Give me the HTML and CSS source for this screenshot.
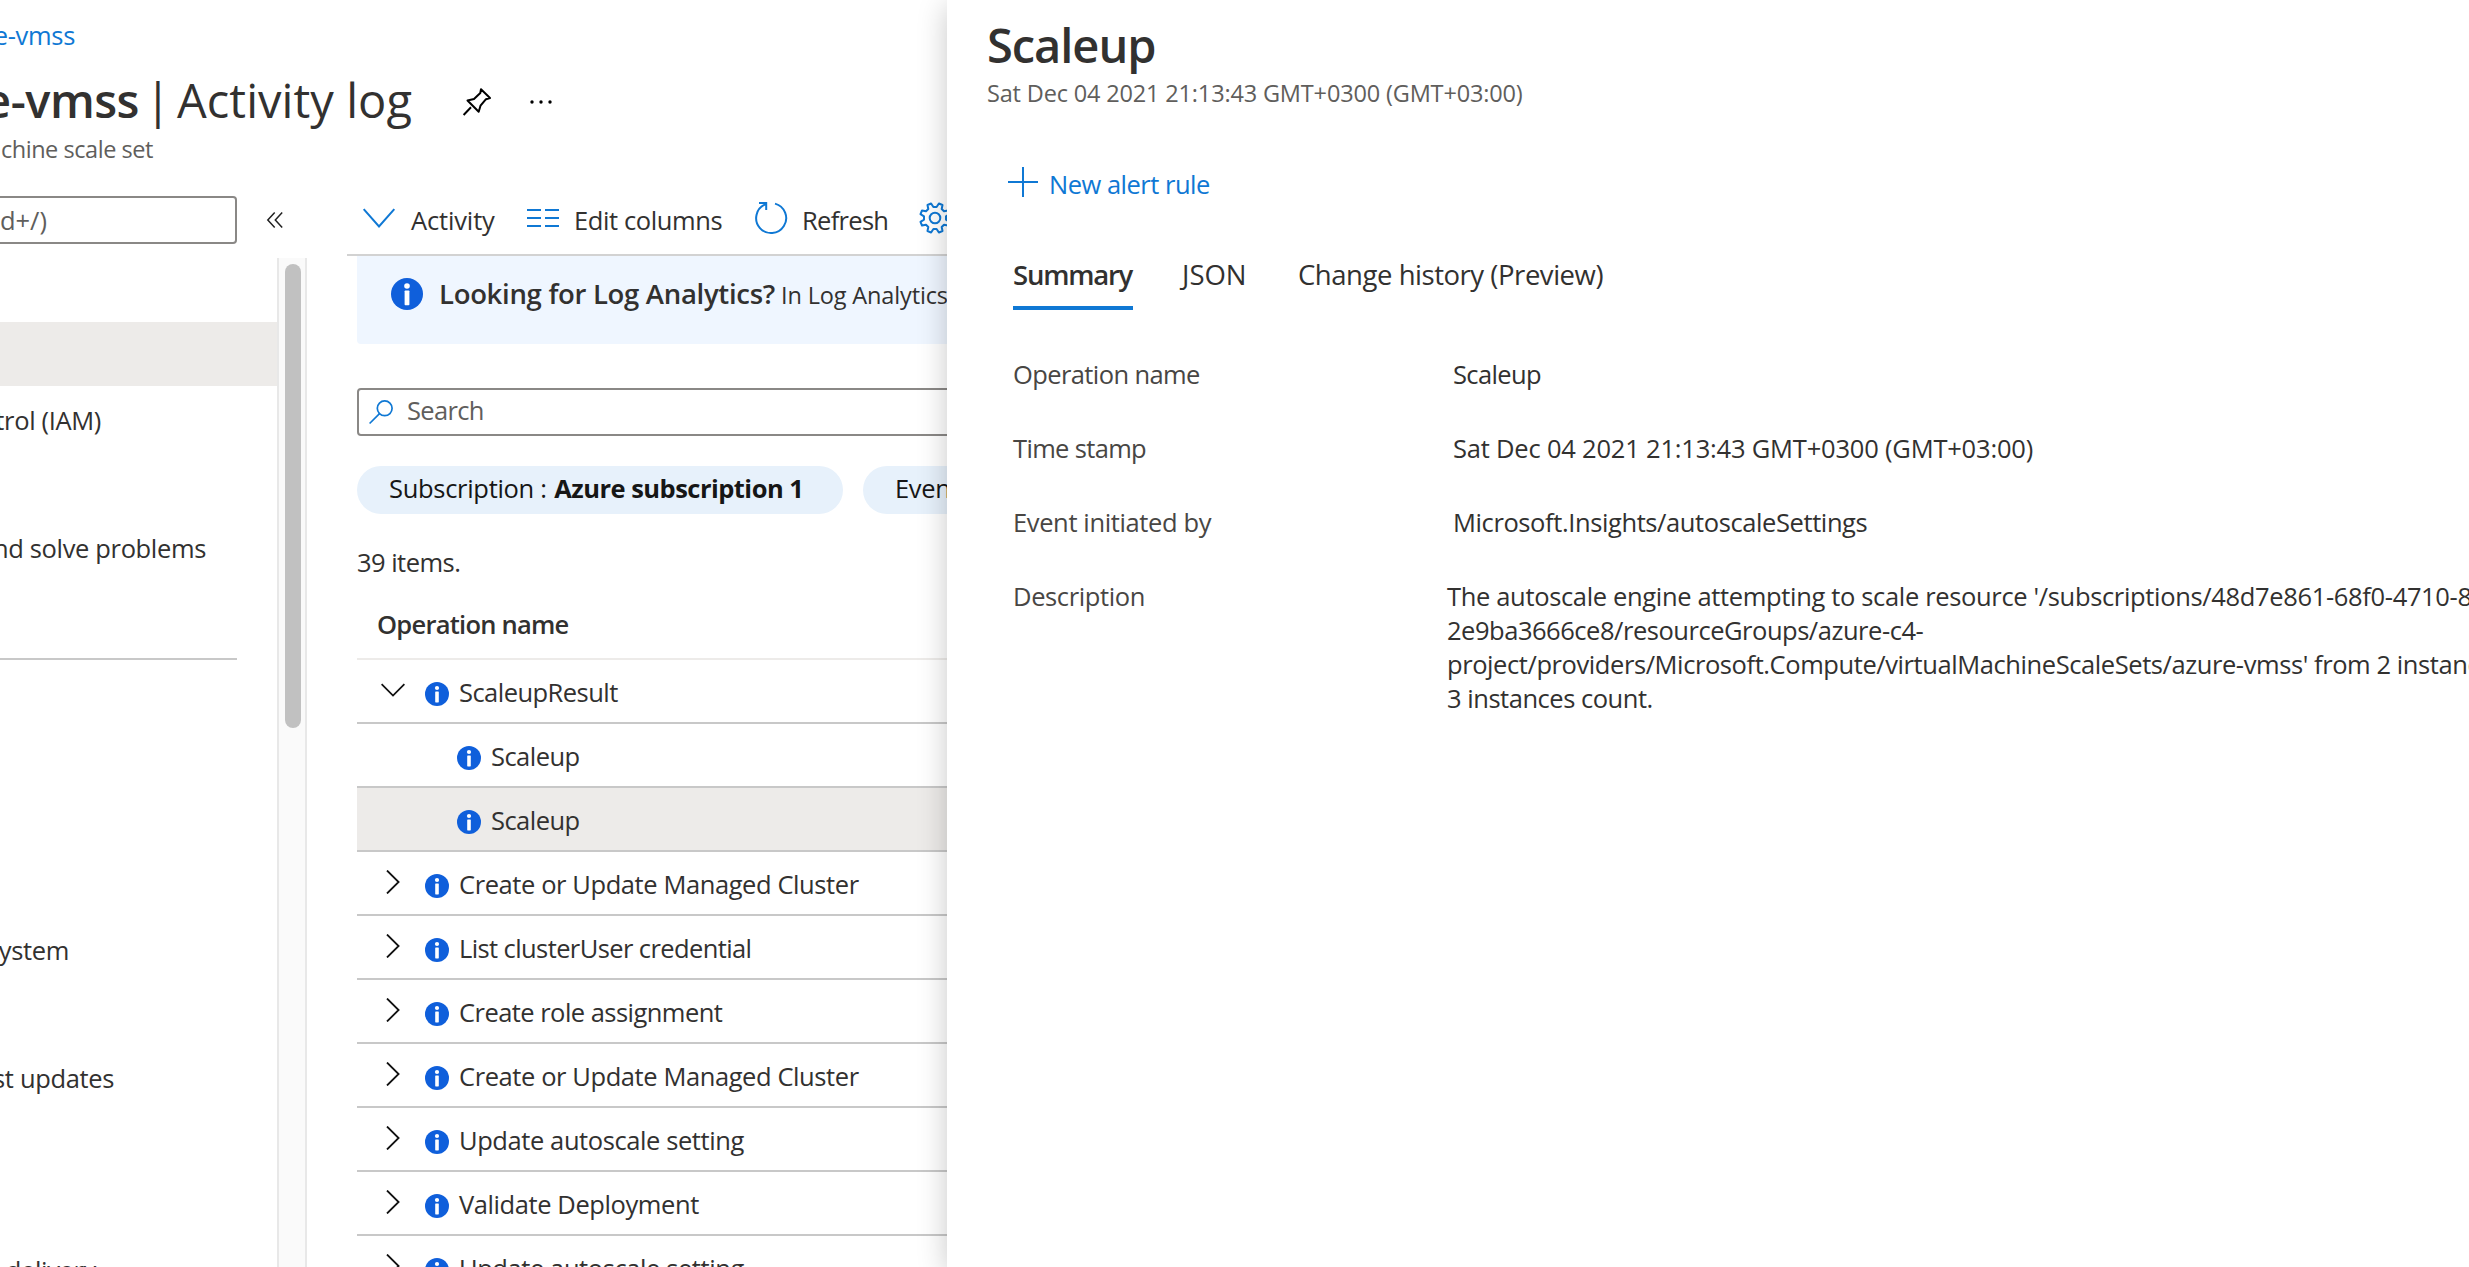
FILE: index.html
```html
<!DOCTYPE html>
<html lang="en">
<head>
<meta charset="utf-8">
<title>Activity log</title>
<link rel="stylesheet" href="styles.css">
</head>
<body>
<svg class="defs" width="0" height="0">
  <symbol id="info" viewBox="0 0 24 24"><circle cx="12" cy="12" r="12" fill="#0f5fdb"/><circle cx="12" cy="6" r="2.1" fill="#fff"/><rect x="10.2" y="9.4" width="3.6" height="11" rx=".6" fill="#fff"/></symbol>
  <symbol id="right" viewBox="0 0 24 24"><path d="M6 .5 17.6 12 6 23.5" fill="none" stroke="#111" stroke-width="1.8"/></symbol>
  <symbol id="down" viewBox="0 0 24 24"><path d="M.6 6.2 12 17.6 23.4 6.2" fill="none" stroke="#111" stroke-width="1.8"/></symbol>
</svg>
<div class="page">
  <header class="header">
    <div class="crumb"><a class="link">e-vmss</a></div>
    <div class="title-row">
      <h1 class="title"><span class="title-name">e-vmss</span><span class="title-bar">|</span><span class="title-page">Activity log</span></h1>
      <svg class="pin" viewBox="0 0 28 28"><path d="M4.500 12.500 11 11 17.300 5 18 1.300 27 10 23 11.200 17.500 17.700 15.700 23.700ZM8 19.300 .600 27" fill="none" stroke="#000" stroke-width="2" stroke-linejoin="round"/></svg>
      <svg class="dots" viewBox="0 0 22 4"><circle cx="2" cy="2" r="1.700"/><circle cx="11" cy="2" r="1.700"/><circle cx="20" cy="2" r="1.700"/></svg>
    </div>
    <div class="kind"><span>chine scale set</span></div>
  </header>
  <div class="columns">
    <aside class="side">
      <div class="side-search">
        <div class="filter"><span>d+/)</span></div>
        <svg class="collapse" viewBox="0 0 16 16"><path d="M7.700 .500.800 8l6.900 7.500M15.200.500 8.300 8l6.900 7.500" fill="none" stroke="#222" stroke-width="1.500"/></svg>
      </div>
      <div class="menu">
        <ul class="menu-list">
          <li class="menu-item"></li>
          <li class="menu-item selected"></li>
          <li class="menu-item"><span class="w-iam">trol (IAM)</span></li>
          <li class="menu-item"></li>
          <li class="menu-item"><span class="w-solve">nd solve problems</span></li>
          <li class="menu-item"></li>
          <li class="menu-rule"></li>
          <li class="menu-item"><span class="w-system">system</span></li>
          <li class="menu-item"></li>
          <li class="menu-item"><span class="w-updates">st updates</span></li>
          <li class="menu-item"></li>
          <li class="menu-item"></li>
          <li class="menu-item"><span class="w-delivery">delivery</span></li>
        </ul>
        <div class="track"><div class="thumb"></div></div>
      </div>
    </aside>
    <main class="main">
      <div class="toolbar">
        <div class="tool tool-a"><svg viewBox="0 0 32 32"><path d="M.700 7.200 16 24.500 31.300 7.200" fill="none" stroke="#0f78d4" stroke-width="2"/></svg><span class="ls1">Activity</span></div>
        <div class="tool tool-b"><svg viewBox="0 0 32 32"><path d="M0 8h14M18 8h14M0 16h14M18 16h14M0 24h14M18 24h14" stroke="#0f78d4" stroke-width="2"/></svg><span class="ls2">Edit columns</span></div>
        <div class="tool tool-c"><svg viewBox="0 0 32 32"><path d="M20 1.600A15 15 0 1 1 10.300 2.300M4 1h7.200v7" fill="none" stroke="#0f78d4" stroke-width="2"/></svg><span class="ls3">Refresh</span></div>
        <div class="tool"><svg viewBox="-16 -16 32 32"><path d="M11 1.600 14.500 3.900 13 7.500 9 6.700 6.700 9 7.500 13 3.900 14.500 1.600 11H-1.600L-3.900 14.500-7.500 13-6.700 9-9 6.700-13 7.500-14.500 3.900-11 1.600V-1.600L-14.500-3.900-13-7.500-9-6.700-6.700-9-7.500-13-3.900-14.500-1.600-11H1.600L3.900-14.500 7.500-13 6.700-9 9-6.700 13-7.500 14.500-3.900 11-1.600Z" fill="none" stroke="#0f78d4" stroke-width="2" stroke-linejoin="round"/><circle r="5.300" fill="none" stroke="#0f78d4" stroke-width="2"/></svg></div>
      </div>
      <div class="banner"><svg class="banner-icon"><use href="#info"/></svg><strong>Looking for Log Analytics?</strong><span>In Log Analytics</span></div>
      <div class="search"><svg viewBox="0 0 24 24"><circle cx="15.700" cy="8.300" r="7.400" fill="none" stroke="#0f78d4" stroke-width="1.700"/><path d="M10.500 13.600.600 23.500" stroke="#0f78d4" stroke-width="1.700"/></svg><span>Search</span></div>
      <div class="pills">
        <div class="pill pill-sub"><span class="ls4">Subscription :</span><b>Azure subscription 1</b></div>
        <div class="pill"><span class="ls4">Event severity</span></div>
      </div>
      <div class="count">39 items.</div>
      <div class="table">
        <div class="table-head">Operation name</div>
        <div class="row"><svg><use href="#down"/></svg><svg><use href="#info"/></svg><span class="w-short">ScaleupResult</span></div>
        <div class="row child"><svg><use href="#info"/></svg><span class="w-short">Scaleup</span></div>
        <div class="row child active"><svg><use href="#info"/></svg><span class="w-short">Scaleup</span></div>
        <div class="row"><svg><use href="#right"/></svg><svg><use href="#info"/></svg><span>Create or Update Managed Cluster</span></div>
        <div class="row"><svg><use href="#right"/></svg><svg><use href="#info"/></svg><span class="w-list">List clusterUser credential</span></div>
        <div class="row"><svg><use href="#right"/></svg><svg><use href="#info"/></svg><span class="w-short">Create role assignment</span></div>
        <div class="row"><svg><use href="#right"/></svg><svg><use href="#info"/></svg><span>Create or Update Managed Cluster</span></div>
        <div class="row"><svg><use href="#right"/></svg><svg><use href="#info"/></svg><span>Update autoscale setting</span></div>
        <div class="row"><svg><use href="#right"/></svg><svg><use href="#info"/></svg><span>Validate Deployment</span></div>
        <div class="row"><svg><use href="#right"/></svg><svg><use href="#info"/></svg><span>Update autoscale setting</span></div>
      </div>
    </main>
  </div>
</div>
<section class="panel">
  <h2 class="panel-title">Scaleup</h2>
  <div class="panel-time">Sat Dec 04 2021 21:13:43 GMT+0300 (GMT+03:00)</div>
  <div class="command"><svg viewBox="0 0 30 30"><path d="M15 0v30M0 15h30" stroke="#0f78d4" stroke-width="2"/></svg><a class="link">New alert rule</a></div>
  <nav class="tabs">
    <div class="tab tab-on">Summary</div>
    <div class="tab tab-json">JSON</div>
    <div class="tab">Change history (Preview)</div>
  </nav>
  <dl class="details">
    <div class="detail"><dt class="d-op">Operation name</dt><dd class="w-name">Scaleup</dd></div>
    <div class="detail"><dt class="d-time">Time stamp</dt><dd class="w-time">Sat Dec 04 2021 21:13:43 GMT+0300 (GMT+03:00)</dd></div>
    <div class="detail"><dt class="d-event">Event initiated by</dt><dd class="w-event">Microsoft.Insights/autoscaleSettings</dd></div>
    <div class="detail"><dt class="d-desc">Description</dt><dd class="text"><span>The autoscale engine attempting to scale resource '/subscriptions/48d7e861-68f0-4710-8</span><br><span class="w-line2">2e9ba3666ce8/resourceGroups/azure-c4-</span><br><span class="w-line3">project/providers/Microsoft.Compute/virtualMachineScaleSets/azure-vmss' from 2 instances</span><br><span class="w-line2">3 instances count.</span></dd></div>
  </dl>
</section>
</body>
</html>
```
FILE: styles.css
```css
* { box-sizing: border-box; }

body {
  margin: 0;
  height: 1267px;
  overflow: hidden;
  position: relative;
  background: #fff;
  color: #323130;
  font: 25.5px/34px "Open Sans", "Noto Sans", sans-serif;
  white-space: nowrap;
}

h1, h2, ul, dl, dd { margin: 0; padding: 0; }
ul { list-style: none; }
svg { display: block; flex: none; overflow: visible; }
.defs { position: absolute; }
.link { color: #0f78d4; }

.page { display: flex; flex-direction: column; height: 1267px; overflow: hidden; }

/* Header */
.header { height: 170px; }
.crumb, .kind { display: flex; justify-content: flex-end; }
.crumb { width: 75px; line-height: 71px; height: 70px; letter-spacing: -0.3px; }
.title-row { display: flex; height: 58px; }
.title { display: flex; width: 463px; line-height: 60px; font-size: 47px; font-weight: 400; }
.title-name { display: flex; justify-content: flex-end; width: 139px; font-weight: 600; letter-spacing: -0.5px; }
.title-bar { width: 38px; padding-left: 6px; }
.title-page { letter-spacing: 0.05px; }
.pin { width: 28px; height: 28px; margin-top: 18px; }
.dots { width: 22px; height: 4px; margin: 30px 0 0 39px; }
.kind { width: 153px; line-height: 42px; font-size: 23.5px; letter-spacing: -0.45px; color: #605e5c; }

/* Side menu */
.columns { display: flex; flex: 1; min-height: 0; }
.side { display: flex; flex-direction: column; width: 347px; }
.side-search { display: flex; align-items: center; height: 88px; padding: 26px 0 14px; }
.filter {
  display: flex;
  justify-content: flex-end;
  width: 237px;
  height: 48px;
  padding-right: 188px;
  border: 2px solid #8a8886;
  border-left: 0;
  border-radius: 0 4px 4px 0;
  line-height: 45px;
  color: #605e5c;
}
.collapse { width: 16px; height: 16px; margin-left: 30px; }
.menu { display: flex; flex: 1; min-height: 0; }
.menu-list { width: 277px; height: 1009px; overflow: hidden; }
.menu-item { display: flex; height: 64px; padding-top: 17px; }
.menu-item span { display: flex; justify-content: flex-end; letter-spacing: -0.35px; }
.selected { background: #edebe9; }
.menu-rule { width: 237px; height: 274px; background: linear-gradient(#c8c8c8, #c8c8c8) 0 16px / 237px 2px no-repeat; }
.w-iam { width: 101px; }
.w-solve { width: 206px; }
.w-system { width: 69px; }
.w-updates { width: 114px; }
.w-delivery { width: 96px; }
.track { width: 30px; padding: 6px; background: #fafafa; border: solid #e8e8e8; border-width: 0 2px; }
.thumb { width: 16px; height: 464px; border-radius: 8px; background: #c1c1c1; }

/* Main column */
.main { flex: 1; }
.toolbar { display: flex; height: 86px; padding: 15px 0 0 16px; border-bottom: 2px solid #d2d2d2; }
.tool { display: flex; align-items: center; gap: 15px; }
.tool svg { width: 32px; height: 32px; margin-bottom: 3px; }
.tool-a { width: 164px; gap: 16px; }
.tool-b { width: 228px; }
.tool-c { width: 164px; }
.ls1 { letter-spacing: -0.15px; }
.ls2 { letter-spacing: -0.4px; }
.ls3 { letter-spacing: -0.7px; }
.ls4 { letter-spacing: -0.3px; }

.banner { display: flex; height: 88px; margin-left: 10px; padding: 22px 34px; background: #eff6ff; border-radius: 0 0 4px 4px; }
.banner-icon { width: 32px; height: 32px; }
.banner strong { width: 342px; margin-left: 16px; line-height: 31px; font-size: 27.5px; font-weight: 600; letter-spacing: -0.3px; }
.banner span { line-height: 34px; font-size: 23.5px; letter-spacing: -0.14px; }

.search { display: flex; align-items: center; gap: 14px; height: 48px; margin: 44px 0 0 10px; padding-left: 10px; border: 2px solid #8a8886; border-radius: 4px; }
.search svg { width: 24px; height: 24px; }
.search span { padding-bottom: 4px; color: #605e5c; letter-spacing: -0.67px; }

.pills { display: flex; gap: 20px; margin: 30px 0 0 10px; }
.pill { display: flex; height: 48px; padding: 5px 32px 9px; border-radius: 24px; background: #e7f1fb; color: #161616; }
.pill-sub { width: 486px; gap: 7.5px; padding-left: 32px; }
.pill b { font-weight: 700; letter-spacing: -0.52px; }
.count { margin: 28px 0 0 10px; line-height: 40px; letter-spacing: -0.53px; }

.table { margin-left: 10px; }
.table-head { height: 78px; padding: 25px 0 0 20px; border-bottom: 2px solid #edebe9; font-weight: 600; letter-spacing: -0.75px; }
.row { display: flex; align-items: center; height: 64px; padding-left: 24px; border-bottom: 2px solid #c8c8c8; }
.row svg { width: 24px; height: 24px; margin-top: 6px; }
.row svg:first-child:not(:nth-last-child(2)) { margin: -2px 20px 0 0; }
.row span { margin-left: 10px; padding-top: 2px; letter-spacing: -0.41px; }
.row .w-short { letter-spacing: -0.54px; }
.row .w-list { letter-spacing: -0.6px; }
.child { padding-left: 100px; }
.active { background: #edebe9; }

/* Detail panel lies over the main column */
.panel {
  position: absolute;
  top: 0;
  right: 0;
  bottom: 0;
  left: 947px;
  padding-left: 40px;
  background: #fff;
  box-shadow: 0 6px 28px rgba(0, 0, 0, 0.22);
}
.panel-title { padding-top: 15px; height: 74px; line-height: 60px; font-size: 47px; font-weight: 600; letter-spacing: -1.05px; }
.panel-time { line-height: 38px; font-size: 23.5px; letter-spacing: -0.16px; color: #605e5c; }
.command { display: flex; gap: 11px; height: 131px; padding: 55px 0 0 21px; letter-spacing: -0.5px; }
.command svg { width: 30px; height: 30px; }
.tabs { display: flex; height: 67px; padding-left: 26px; font-size: 27.5px; }
.tab { line-height: 64px; letter-spacing: -0.46px; }
.tab-on { width: 120px; margin-right: 48px; border-bottom: 4px solid #0f78d4; font-weight: 600; letter-spacing: -1.22px; }
.tab-json { width: 117px; padding-left: 1px; letter-spacing: 0; }
.details { padding: 47px 0 0 26px; }
.detail { display: flex; height: 74px; }
.detail dt { width: 440px; color: #484644; }
.detail dd { width: 1010px; letter-spacing: -0.4px; }
.detail .text { margin-left: -6px; letter-spacing: -0.34px; }
.detail .d-op { letter-spacing: -0.6px; }
.d-time { letter-spacing: -0.66px; }
.d-event, .d-desc { letter-spacing: -0.37px; }
.detail .w-name { letter-spacing: -0.61px; }
.detail .w-time { letter-spacing: -0.2px; }
.w-line2 { letter-spacing: -0.47px; }
.w-line3 { letter-spacing: -0.42px; }
```
